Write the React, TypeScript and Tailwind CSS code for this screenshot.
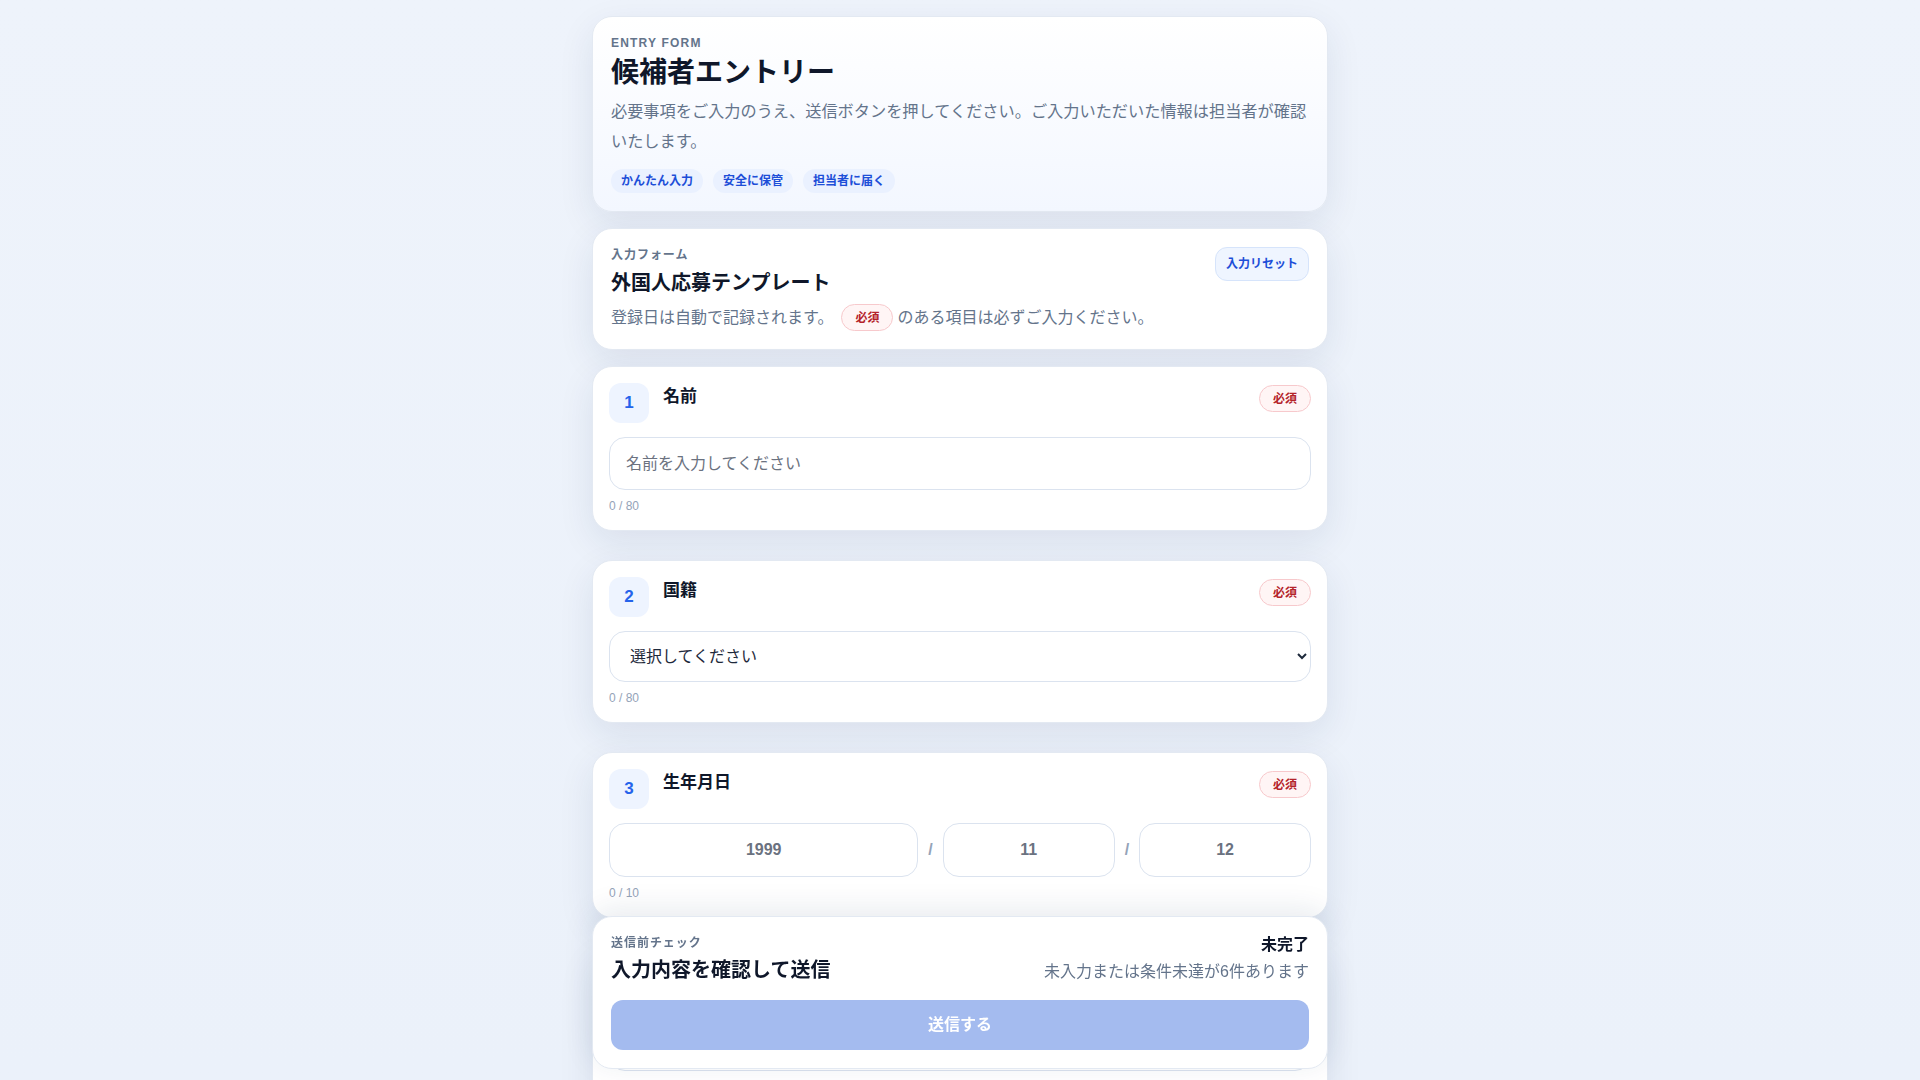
import React from "react";

const FONT = {
  fontFamily: '"Liberation Sans", "Noto Sans CJK JP", "Noto Sans", sans-serif',
};

function RequiredBadge() {
  return (
    <span className="inline-flex h-[27px] shrink-0 items-center rounded-full border border-[#f7c9cc] bg-[#fff5f5] px-[13px] text-xs font-bold text-[#b4232a]">
      必須
    </span>
  );
}

function QuestionHeader({ no, label }: { no: number; label: string }) {
  return (
    <div className="flex items-start justify-between">
      <div className="flex items-start gap-[14px]">
        <div className="flex h-[40px] w-[40px] items-center justify-center rounded-xl bg-[#eef4ff] text-[17px] font-bold text-[#2563eb]">
          {no}
        </div>
        <div className="text-[17px] font-bold leading-7 text-[#0f172a]">{label}</div>
      </div>
      <div className="mt-0.5">
        <RequiredBadge />
      </div>
    </div>
  );
}

function QuestionCard({ children }: { children: React.ReactNode }) {
  return (
    <section className="rounded-[20px] border border-[#e3e9f2] bg-white p-4 shadow-[0_12px_36px_rgba(20,45,90,0.09)]">
      {children}
    </section>
  );
}

function Counter({ text }: { text: string }) {
  return <div className="mt-2 text-xs leading-4 text-[#94a3b8]">{text}</div>;
}

const inputCls =
  "mt-[14px] h-[53px] w-full rounded-2xl border border-[#dbe3ef] bg-white px-4 text-base text-[#1e293b] outline-none placeholder:text-[#6b7280]";
const dateCls =
  "h-[54px] w-full min-w-0 rounded-2xl border border-[#dbe3ef] bg-white text-center text-base font-bold text-[#1e293b] outline-none placeholder:text-[#6b7280]";

export default function App() {
  return (
    <div
      className="h-screen overflow-hidden bg-gradient-to-b from-[#eef3fb] to-[#ebf1fa] text-[#0f172a]"
      style={FONT}
    >
      <div className="mx-auto flex max-w-[768px] flex-col px-4 pb-3 pt-4">
        {/* Hero card */}
        <header className="rounded-[20px] border border-[#e3e9f2] bg-gradient-to-b from-white to-[#f3f7ff] p-[18px] shadow-[0_12px_36px_rgba(20,45,90,0.09)]">
          <div className="text-xs font-bold leading-4 tracking-[0.1em] text-[#64748b]">
            ENTRY FORM
          </div>
          <h1 className="mt-1 text-[28px] font-bold leading-9 text-[#0f172a]">
            候補者エントリー
          </h1>
          <p className="-mr-2 mt-[5px] text-[16.2px] leading-[30px] text-[#64748b]">
            必要事項をご入力のうえ、送信ボタンを押してください。ご入力いただいた情報は担当者が確認いたします。
          </p>
          <div className="mt-[13px] flex gap-2.5">
            {["かんたん入力", "安全に保管", "担当者に届く"].map((t) => (
              <span
                key={t}
                className="inline-flex h-6 items-center rounded-full bg-[#eaf1ff] px-2.5 text-xs font-bold text-[#1d4ed8]"
              >
                {t}
              </span>
            ))}
          </div>
        </header>

        {/* Template card */}
        <section className="mt-4 flex items-start justify-between rounded-[20px] border border-[#e3e9f2] bg-white p-[18px] shadow-[0_12px_36px_rgba(20,45,90,0.09)]">
          <div>
            <div className="text-xs font-semibold leading-4 tracking-[0.08em] text-[#64748b]">
              入力フォーム
            </div>
            <h2 className="mt-1.5 text-xl font-bold leading-7 text-[#0f172a]">
              外国人応募テンプレート
            </h2>
            <div className="mt-[7px] flex items-center text-base text-[#64748b]">
              <span>登録日は自動で記録されます。</span>
              <span className="ml-2 mr-1">
                <RequiredBadge />
              </span>
              <span>のある項目は必ずご入力ください。</span>
            </div>
          </div>
          <button className="h-[34px] rounded-xl border border-[#d6e4fb] bg-[#eff5ff] px-2.5 text-xs font-semibold text-[#1d4ed8]">
            入力リセット
          </button>
        </section>

        {/* Questions */}
        <div className="mt-4 flex flex-col gap-[29px]">
          <QuestionCard>
            <QuestionHeader no={1} label="名前" />
            <input type="text" placeholder="名前を入力してください" className={inputCls} />
            <Counter text="0 / 80" />
          </QuestionCard>

          <QuestionCard>
            <QuestionHeader no={2} label="国籍" />
            <select
              defaultValue=""
              className="mt-[14px] h-[51px] w-full rounded-2xl border border-[#dbe3ef] bg-white pl-4 pr-1 text-base text-[#1e293b] outline-none"
            >
              <option value="">選択してください</option>
              <option value="jp">日本</option>
              <option value="cn">中国</option>
              <option value="vn">ベトナム</option>
            </select>
            <Counter text="0 / 80" />
          </QuestionCard>

          <QuestionCard>
            <QuestionHeader no={3} label="生年月日" />
            <div className="mt-[14px] grid grid-cols-[1.8fr_auto_1fr_auto_1fr] items-center gap-2.5">
              <input type="text" placeholder="1999" className={dateCls} />
              <span className="text-base font-bold text-[#94a3b8]">/</span>
              <input type="text" placeholder="11" className={dateCls} />
              <span className="text-base font-bold text-[#94a3b8]">/</span>
              <input type="text" placeholder="12" className={dateCls} />
            </div>
            <Counter text="0 / 10" />
          </QuestionCard>

          <QuestionCard>
            <QuestionHeader no={4} label="メールアドレス" />
            <input type="text" placeholder="example@mail.com" className={inputCls} />
            <Counter text="0 / 120" />
          </QuestionCard>

          <QuestionCard>
            <QuestionHeader no={5} label="電話番号" />
            <input type="text" placeholder="090-1234-5678" className={inputCls} />
            <Counter text="0 / 20" />
          </QuestionCard>

          <QuestionCard>
            <QuestionHeader no={6} label="志望動機" />
            <textarea
              placeholder="志望動機を入力してください"
              className="mt-[14px] h-[120px] w-full resize-none rounded-2xl border border-[#dbe3ef] bg-white px-4 py-3 text-base text-[#1e293b] outline-none placeholder:text-[#6b7280]"
            />
            <Counter text="0 / 400" />
          </QuestionCard>
        </div>

        {/* Sticky submit footer */}
        <footer className="sticky bottom-[11px] mt-[29px] rounded-[20px] border border-[#e3e9f2] bg-white p-[18px] shadow-[0_-6px_30px_rgba(20,45,90,0.10)]">
          <div className="flex items-start justify-between">
            <div>
              <div className="text-xs font-semibold leading-4 tracking-[0.08em] text-[#64748b]">
                送信前チェック
              </div>
              <div className="mt-[5px] text-xl font-bold leading-7 text-[#0f172a]">
                入力内容を確認して送信
              </div>
            </div>
            <div className="text-right">
              <div className="text-base font-bold leading-5 text-[#0f172a]">未完了</div>
              <div className="mt-[5px] text-base leading-6 text-[#64748b]">
                未入力または条件未達が6件あります
              </div>
            </div>
          </div>
          <button
            disabled
            className="mt-4 h-[50px] w-full rounded-xl bg-[#a4bbef] text-base font-bold text-white"
          >
            送信する
          </button>
        </footer>
      </div>
    </div>
  );
}
